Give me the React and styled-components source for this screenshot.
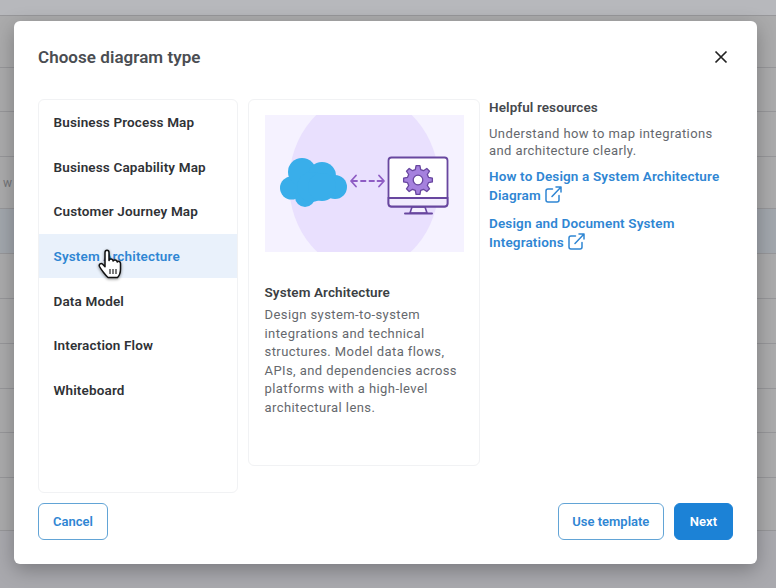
import React from "react";
import styled, { createGlobalStyle } from "styled-components";

const Global = createGlobalStyle`
  html, body { margin: 0; padding: 0; height: 100%; overflow: hidden; }
  body { font-family: Roboto, "Liberation Sans", sans-serif; background: #a9a9ae; }
  * { box-sizing: border-box; }
`;

const Page = styled.div`
  position: relative;
  width: 776px;
  height: 588px;
  overflow: hidden;
  background: #a9a9ae;
`;

const BgRow = styled.div`
  height: ${(p) => p.$h}px;
  border-bottom: 1px solid #97979a;
  background: ${(p) => p.$bg || "#ababac"};
  color: #747579;
  font-size: 12px;
  line-height: ${(p) => p.$h}px;
  padding-left: 3px;
`;

const Modal = styled.div`
  position: absolute;
  left: 14px;
  top: 21px;
  width: 743px;
  height: 543px;
  background: #fff;
  border-radius: 6px;
  box-shadow: 0 6px 20px rgba(0, 0, 0, 0.28);
  padding: 24px;
  display: flex;
  flex-direction: column;
`;

const Header = styled.div`
  display: flex;
  justify-content: space-between;
  align-items: center;
  height: 24px;
  margin-bottom: 30px;
`;

const Title = styled.h2`
  margin: 0;
  font-size: 17px;
  font-weight: 600;
  letter-spacing: 0.05px;
  color: #4a4d52;
`;

const CloseBtn = styled.button`
  border: none;
  background: none;
  padding: 0;
  width: 24px;
  height: 24px;
  display: flex;
  align-items: center;
  justify-content: center;
  color: #222;
`;

const Body = styled.div`
  display: flex;
  align-items: flex-start;
  height: 394px;
`;

const TypeList = styled.div`
  width: 200px;
  height: 100%;
  border: 1px solid #f1f2f4;
  border-radius: 6px;
  overflow: hidden;
`;

const TypeItem = styled.div`
  height: 44.6px;
  padding-left: 14.5px;
  display: flex;
  align-items: center;
  font-size: 13.5px;
  font-weight: 600;
  letter-spacing: 0.15px;
  color: ${(p) => (p.$active ? "#2f86d3" : "#2f3236")};
  background: ${(p) => (p.$active ? "#e9f1fb" : "transparent")};
`;

const Preview = styled.div`
  width: 232px;
  height: 367px;
  margin: 0 9px 0 10px;
  border: 1px solid #f1f2f4;
  border-radius: 6px;
  padding: 15px 15.5px;
`;

const PreviewArt = styled.div`
  width: 199px;
  height: 137px;
  margin-bottom: 31px;
  background: #f5f2ff;
  overflow: hidden;
`;

const PreviewTitle = styled.div`
  font-size: 13.5px;
  font-weight: 600;
  letter-spacing: 0.1px;
  color: #3c3f44;
  line-height: 18px;
  margin-bottom: 5px;
`;

const PreviewText = styled.p`
  margin: 0;
  font-size: 13px;
  line-height: 18.6px;
  letter-spacing: 0.42px;
  color: #65686d;
`;

const Resources = styled.div`
  flex: 1;
  margin-top: -1px;
`;

const ResTitle = styled.div`
  font-size: 13.5px;
  font-weight: 600;
  letter-spacing: 0.1px;
  color: #45484d;
  line-height: 18px;
  margin-bottom: 9px;
`;

const ResText = styled.p`
  margin: 0 0 8px;
  font-size: 13px;
  line-height: 17px;
  letter-spacing: 0.4px;
  color: #65686d;
`;

const ResLink = styled.a`
  display: block;
  margin-bottom: 10px;
  font-size: 13.5px;
  font-weight: 600;
  line-height: 18.5px;
  letter-spacing: 0.15px;
  color: #2f86d3;

  svg {
    vertical-align: -3px;
    margin-left: 4px;
  }
`;

const Footer = styled.div`
  display: flex;
  justify-content: space-between;
  margin-top: 10px;
`;

const Actions = styled.div`
  display: flex;
  gap: 10px;
`;

const Button = styled.button`
  height: 37px;
  padding: 0 ${(p) => p.$px}px;
  border-radius: 6px;
  font-family: inherit;
  font-size: 13px;
  font-weight: 600;
  border: 1px solid ${(p) => (p.$primary ? "#1c82d6" : "#62a4d6")};
  background: ${(p) => (p.$primary ? "#1c82d6" : "#fff")};
  color: ${(p) => (p.$primary ? "#fff" : "#2f86d3")};
`;

const Cursor = styled.svg`
  position: absolute;
  left: 98px;
  top: 249px;
  filter: drop-shadow(0 1px 1.5px rgba(0, 0, 0, 0.45));
`;

const CloseIcon = () => (
  <svg width="14" height="14" viewBox="0 0 14 14" fill="none" stroke="currentColor" strokeWidth="1.7">
    <path d="M1.5 1.5l11 11M12.5 1.5l-11 11" />
  </svg>
);

const ExternalIcon = () => (
  <svg width="17" height="17" viewBox="0 0 17 17" fill="none" stroke="#2f86d3" strokeWidth="1.5" strokeLinecap="round" strokeLinejoin="round">
    <path d="M7.5 3H3a2 2 0 0 0-2 2v9a2 2 0 0 0 2 2h9a2 2 0 0 0 2-2V9.5" />
    <path d="M7 10.5L16 1M11 1h5v5" />
  </svg>
);

// gear outline with n teeth, centred on 0,0
function gearPath(n, outer, root) {
  const pts = [];
  const step = (Math.PI * 2) / n;
  for (let i = 0; i < n; i++) {
    const a = i * step - Math.PI / 2;
    const at = (r, d) => `${(Math.cos(a + d * step) * r).toFixed(2)} ${(Math.sin(a + d * step) * r).toFixed(2)}`;
    pts.push(at(root, -0.32), at(outer, -0.17), at(outer, 0.17), at(root, 0.32));
  }
  return "M" + pts.join("L") + "Z";
}

const ArchArt = () => (
  <svg width="199" height="137" viewBox="0 0 199 137">
    <ellipse cx="99" cy="68" rx="75" ry="88" fill="#e9e0fe" />
    <g fill="#39aeea">
      <circle cx="26.5" cy="73" r="11.5" />
      <circle cx="37" cy="57" r="14" />
      <circle cx="57" cy="61" r="14" />
      <circle cx="70" cy="72" r="12" />
      <circle cx="40" cy="82" r="10" />
      <circle cx="47" cy="72" r="15" />
      <circle cx="57" cy="72" r="14" />
    </g>
    <g fill="none" stroke="#8e5cc4" strokeWidth="1.8" strokeLinecap="round" strokeLinejoin="round">
      <path d="M91 60.5l-5 5.5 5 5.5M114 60.5l5 5.5-5 5.5" />
      <path d="M87 66h5M96 66h4.5M104.5 66h4.5M112.5 66h5" />
    </g>
    <path d="M147 92l-2 6h17l-2-6z" fill="#f4f0fe" stroke="#68479f" strokeWidth="1.6" />
    <path d="M140 98.5h27" stroke="#68479f" strokeWidth="2" strokeLinecap="round" />
    <rect x="123.5" y="42.5" width="59" height="49" rx="3" fill="#fff" stroke="#68479f" strokeWidth="1.8" />
    <path d="M123.5 83h59v5.5a3 3 0 0 1-3 3h-53a3 3 0 0 1-3-3z" fill="#f1ecfd" stroke="#68479f" strokeWidth="1.8" />
    <g transform="translate(153 65)">
      <path d={gearPath(8, 14.5, 10.8)} fill="#a581de" stroke="#68479f" strokeWidth="1.3" strokeLinejoin="round" />
      <circle r="4.8" fill="#fff" stroke="#68479f" strokeWidth="1.3" />
    </g>
  </svg>
);

const HandCursor = () => (
  <Cursor width="26" height="30" viewBox="0 0 26 30">
    <path
      d="M7 3.5c0-3 4-3 4 0v8c.5-2 4-2 4.2.6.7-1.8 3.8-1.4 4 .9 1-1.3 3.3-.7 3.3 1.5v5.5c0 4-2 7.5-3 8.5h-9.5c-2-1.5-7-8-8.5-11-1-2.2 1.5-3.8 3.2-2.2l2.3 2.4z"
      fill="#fff"
      stroke="#111"
      strokeWidth="1.5"
      strokeLinejoin="round"
    />
    <path d="M12 20v5M15 20v5M18 20v5" stroke="#111" strokeWidth="1.1" />
  </Cursor>
);

const types = [
  "Business Process Map",
  "Business Capability Map",
  "Customer Journey Map",
  "System Architecture",
  "Data Model",
  "Interaction Flow",
  "Whiteboard",
];

const bgRows = [
  { h: 16, bg: "#b7b8bc" },
  { h: 52 },
  { h: 44 },
  { h: 45 },
  { h: 52, label: "w" },
  { h: 45, bg: "#a2a7ad" },
  { h: 45 },
  { h: 45 },
  { h: 45 },
  { h: 44 },
  { h: 45 },
  { h: 53 },
];

export default function App() {
  return (
    <Page>
      <Global />
      {bgRows.map((row, i) => (
        <BgRow key={i} $h={row.h} $bg={row.bg}>
          {row.label}
        </BgRow>
      ))}
      <Modal>
        <Header>
          <Title>Choose diagram type</Title>
          <CloseBtn>
            <CloseIcon />
          </CloseBtn>
        </Header>
        <Body>
          <TypeList>
            {types.map((t) => (
              <TypeItem key={t} $active={t === "System Architecture"}>
                {t}
              </TypeItem>
            ))}
          </TypeList>
          <Preview>
            <PreviewArt>
              <ArchArt />
            </PreviewArt>
            <PreviewTitle>System Architecture</PreviewTitle>
            <PreviewText>
              Design system-to-system integrations and technical structures. Model data flows, APIs, and dependencies
              across platforms with a high-level architectural lens.
            </PreviewText>
          </Preview>
          <Resources>
            <ResTitle>Helpful resources</ResTitle>
            <ResText>Understand how to map integrations and architecture clearly.</ResText>
            <ResLink>
              How to Design a System Architecture Diagram
              <ExternalIcon />
            </ResLink>
            <ResLink>
              Design and Document System Integrations
              <ExternalIcon />
            </ResLink>
          </Resources>
        </Body>
        <Footer>
          <Button $px={14}>Cancel</Button>
          <Actions>
            <Button $px={13.5}>Use template</Button>
            <Button $primary $px={15}>
              Next
            </Button>
          </Actions>
        </Footer>
      </Modal>
      <HandCursor />
    </Page>
  );
}
